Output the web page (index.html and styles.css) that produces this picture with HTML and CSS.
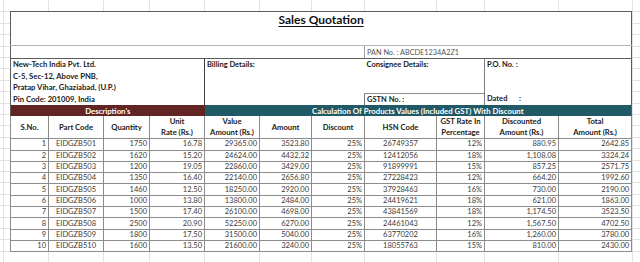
FILE: index.html
```html
<!DOCTYPE html>
<html lang="en">
<head>
    <meta charset="UTF-8">
    <meta name="viewport" content="width=device-width, initial-scale=1.0">
    <title>Sales Quotation</title>
    <link rel="stylesheet" href="styles.css">
</head>
<body>
    <div class="page">
        <table class="quote">
            <colgroup>
                <col class="c-sno">
                <col class="c-part">
                <col class="c-qty">
                <col class="c-rate">
                <col class="c-value">
                <col class="c-amount">
                <col class="c-disc">
                <col class="c-hsn">
                <col class="c-gst">
                <col class="c-discamt">
                <col class="c-total">
            </colgroup>

            <tr class="r-title">
                <td colspan="11" class="title"><span>Sales Quotation</span></td>
            </tr>
            <tr class="r-pan">
                <td colspan="7" class="pan-blank"></td>
                <td colspan="4" class="pan">PAN No. : ABCDE1234A2Z1</td>
            </tr>

            <!-- party details -->
            <tr class="r-addr">
                <td colspan="4" rowspan="4" class="company">
                    New-Tech India Pvt. Ltd.<br>
                    C-5, Sec-12, Above PNB,<br>
                    Pratap Vihar, Ghaziabad, (U.P.)<br>
                    Pin Code: 201009, India
                </td>
                <td colspan="3" rowspan="4" class="label-cell">Billing Details:</td>
                <td colspan="2" rowspan="3" class="label-cell">Consignee Details:</td>
                <td colspan="2" rowspan="3" class="label-cell po">P.O. No. :</td>
            </tr>
            <tr class="r-addr"></tr>
            <tr class="r-addr"></tr>
            <tr class="r-addr">
                <td colspan="2" class="label-cell gstn">GSTN No. :</td>
                <td colspan="2" class="label-cell dated"><span class="dated-label">Dated</span>:</td>
            </tr>

            <tr class="r-band">
                <td colspan="4" class="band band-desc">Description's</td>
                <td colspan="7" class="band band-calc">Calculation Of Products Values (Included GST) With Discount</td>
            </tr>

            <tr class="r-head">
                <th>S.No.</th>
                <th>Part Code</th>
                <th>Quantity</th>
                <th>Unit<br>Rate (Rs.)</th>
                <th>Value<br>Amount (Rs.)</th>
                <th>Amount</th>
                <th>Discount</th>
                <th>HSN Code</th>
                <th>GST Rate In<br>Percentage</th>
                <th>Discounted<br>Amount (Rs.)</th>
                <th>Total<br>Amount (Rs.)</th>
            </tr>

            <tr class="row"><td>1</td><td class="ctr">EIDGZB501</td><td>1750</td><td>16.78</td><td>29365.00</td><td>3523.80</td><td>25%</td><td class="ctr">26749357</td><td>12%</td><td>880.95</td><td>2642.85</td></tr>
            <tr class="row"><td>2</td><td class="ctr">EIDGZB502</td><td>1620</td><td>15.20</td><td>24624.00</td><td>4432.32</td><td>25%</td><td class="ctr">12412056</td><td>18%</td><td>1,108.08</td><td>3324.24</td></tr>
            <tr class="row"><td>3</td><td class="ctr">EIDGZB503</td><td>1200</td><td>19.05</td><td>22860.00</td><td>3429.00</td><td>25%</td><td class="ctr">91899991</td><td>15%</td><td>857.25</td><td>2571.75</td></tr>
            <tr class="row"><td>4</td><td class="ctr">EIDGZB504</td><td>1350</td><td>16.40</td><td>22140.00</td><td>2656.80</td><td>25%</td><td class="ctr">27228423</td><td>12%</td><td>664.20</td><td>1992.60</td></tr>
            <tr class="row"><td>5</td><td class="ctr">EIDGZB505</td><td>1460</td><td>12.50</td><td>18250.00</td><td>2920.00</td><td>25%</td><td class="ctr">37928463</td><td>16%</td><td>730.00</td><td>2190.00</td></tr>
            <tr class="row"><td>6</td><td class="ctr">EIDGZB506</td><td>1000</td><td>13.80</td><td>13800.00</td><td>2484.00</td><td>25%</td><td class="ctr">24419621</td><td>18%</td><td>621.00</td><td>1863.00</td></tr>
            <tr class="row"><td>7</td><td class="ctr">EIDGZB507</td><td>1500</td><td>17.40</td><td>26100.00</td><td>4698.00</td><td>25%</td><td class="ctr">43841569</td><td>18%</td><td>1,174.50</td><td>3523.50</td></tr>
            <tr class="row"><td>8</td><td class="ctr">EIDGZB508</td><td>2500</td><td>20.90</td><td>52250.00</td><td>6270.00</td><td>25%</td><td class="ctr">24461043</td><td>12%</td><td>1,567.50</td><td>4702.50</td></tr>
            <tr class="row"><td>9</td><td class="ctr">EIDGZB509</td><td>1800</td><td>17.50</td><td>31500.00</td><td>5040.00</td><td>25%</td><td class="ctr">63770202</td><td>16%</td><td>1,260.00</td><td>3780.00</td></tr>
            <tr class="row"><td>10</td><td class="ctr">EIDGZB510</td><td>1600</td><td>13.50</td><td>21600.00</td><td>3240.00</td><td>25%</td><td class="ctr">18055763</td><td>15%</td><td>810.00</td><td>2430.00</td></tr>
        </table>
    </div>
</body>
</html>
```

FILE: styles.css
```css
body {
    margin: 0;
    font-family: 'Lato', sans-serif;
    background-color: #fff;
    /* excel gridlines around the sheet */
    background-image:
        linear-gradient(#e2e2e2, #e2e2e2),
        linear-gradient(#e2e2e2, #e2e2e2),
        linear-gradient(#e2e2e2, #e2e2e2),
        linear-gradient(#e2e2e2, #e2e2e2),
        linear-gradient(#e2e2e2, #e2e2e2),
        linear-gradient(#e2e2e2, #e2e2e2),
        linear-gradient(#e2e2e2, #e2e2e2),
        linear-gradient(#e2e2e2, #e2e2e2),
        linear-gradient(#e2e2e2, #e2e2e2),
        linear-gradient(#e2e2e2, #e2e2e2),
        linear-gradient(#e2e2e2, #e2e2e2),
        linear-gradient(#e2e2e2, #e2e2e2),
        repeating-linear-gradient(to bottom, transparent 0, transparent 10.4px, #e2e2e2 10.4px, #e2e2e2 11.4px);
    background-size: 1px 100%, 1px 100%, 1px 100%, 1px 100%, 1px 100%, 1px 100%,
        1px 100%, 1px 100%, 1px 100%, 1px 100%, 1px 100%, 1px 100%, 100% 100%;
    background-position: 3px 0, 48px 0, 103px 0, 149px 0, 204px 0, 259px 0,
        311px 0, 364px 0, 436px 0, 484px 0, 558px 0, 632px 0, 0 0.5px;
    background-repeat: no-repeat;
    min-height: 262px;
}

.page {
    padding: 11px 10px 0 10px;
}

.quote {
    width: 621px;
    table-layout: fixed;
    border-collapse: collapse;
    background: white;
    border: 1px solid #5c5c5c;
    font-size: 7.5px;
    color: #3a3a3a;
}

.c-sno { width: 38px; }
.c-part { width: 55px; }
.c-qty { width: 46px; }
.c-rate { width: 55px; }
.c-value { width: 55px; }
.c-amount { width: 52px; }
.c-disc { width: 53px; }
.c-hsn { width: 72px; }
.c-gst { width: 48px; }
.c-discamt { width: 74px; }
.c-total { width: 73px; }

.quote td,
.quote th {
    padding: 0 2px;
    overflow: hidden;
    white-space: nowrap;
}

.r-title td {
    height: 33px;
}

.title {
    text-align: center;
    vertical-align: top;
    padding-top: 3px;
    border-bottom: 1px solid #b5b5b5;
}

.title span {
    font-size: 12px;
    font-weight: bold;
    color: #111;
    text-decoration: underline;
    text-underline-offset: 2px;
}

.r-pan td {
    height: 12px;
    border-bottom: 1px solid #5c5c5c;
}

.pan {
    border-left: 1px solid #9a9a9a;
    color: #555;
    font-size: 7.3px;
}

.r-addr {
    height: 11.6px;
}

.company {
    vertical-align: top;
    line-height: 11.5px;
    font-size: 7.7px;
    font-weight: bold;
    color: #1a1a1a;
    border-right: 1px solid #3c3c3c;
}

.label-cell {
    vertical-align: top;
    line-height: 11.5px;
    font-weight: bold;
    color: #1a1a1a;
    font-size: 7.5px;
}

.po {
    border-left: 1px solid #7a7a7a;
}

.gstn {
    border-top: 1px solid #8a8a8a;
    border-left: 1px solid #7a7a7a;
}

.dated {
    border-left: 1px solid #7a7a7a;
}

.dated-label {
    display: inline-block;
    width: 32px;
}

.r-band td {
    height: 11px;
}

.band {
    text-align: center;
    font-size: 7.8px;
    font-weight: bold;
    color: white;
}

.band-desc {
    background: #632523;
}

.band-calc {
    background: #215967;
}

.r-head th {
    height: 22px;
    line-height: 11px;
    font-size: 7.7px;
    font-weight: bold;
    color: #1a1a1a;
    border: 1px solid #8c8c8c;
    border-top: none;
}

.row td {
    height: 10.3px;
    line-height: 10px;
    text-align: right;
    border: 1px solid #8c8c8c;
}

.row td.ctr {
    text-align: center;
}
```
